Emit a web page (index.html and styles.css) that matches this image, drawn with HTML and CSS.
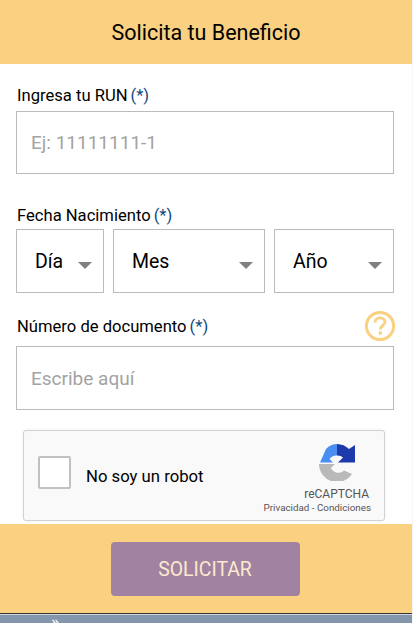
FILE: index.html
```html
<!DOCTYPE html>
<html lang="es">
<head>
	<meta charset="UTF-8">
	<title>Solicita tu Beneficio</title>
	<link rel="stylesheet" href="styles.css">
</head>
<body>
	<div class="main">
		<div class="head">Solicita tu Beneficio</div>
		<form class="form">
			<label class="lab lab_run">Ingresa tu RUN<span class="req">(*)</span></label>
			<input class="campo" type="text" placeholder="Ej: 11111111-1">

			<label class="lab lab_fecha">Fecha Nacimiento<span class="req">(*)</span></label>
			<div class="fecha">
				<div class="sel sel_dia"><select><option>Día</option></select></div>
				<div class="sel sel_mes"><select><option>Mes</option></select></div>
				<div class="sel sel_ano"><select><option>Año</option></select></div>
			</div>

			<div class="doc_row">
				<label class="lab">Número de documento<span class="req">(*)</span></label>
				<svg class="ayuda" width="32" height="32" viewBox="0 0 32 32">
					<circle cx="16" cy="16" r="13.6" fill="none" stroke="#fad081" stroke-width="3"/>
					<path d="M11 12.6c0-3 2.2-4.8 5-4.8s5 1.8 5 4.3c0 3.4-4.6 3.4-4.6 7.3" fill="none" stroke="#fad081" stroke-width="2.8"/>
					<rect x="14.8" y="21.4" width="3.2" height="3.2" fill="#fad081"/>
				</svg>
			</div>
			<input class="campo" type="text" placeholder="Escribe aquí">

			<div class="captcha">
				<span class="check"></span>
				<span class="robot">No soy un robot</span>
				<div class="marca">
					<svg width="36" height="37" viewBox="0 0 36 37">
						<path d="M0 20H16L12 24A8 8 0 0 0 25 26.5L33 30A18 18 0 0 1 0 20Z" fill="#b9b9b9"/>
						<path d="M18 0C14 0 10 1.500 7 5L1 18.500H14L10.500 15A8.500 8.500 0 0 1 18 11.500Z" fill="#4a8ef4"/>
						<path d="M18 0A18 18 0 0 1 30 5L36 1V18.500H19L24 13.500A8 8 0 0 0 18 11.500Z" fill="#1c3aa9"/>
					</svg>
					<p class="re">reCAPTCHA</p>
					<p class="links">Privacidad - Condiciones</p>
				</div>
			</div>
		</form>
		<div class="foot">
			<button class="enviar" type="button">SOLICITAR</button>
		</div>
		<div class="barra"><span>»</span></div>
	</div>
</body>
</html>
```

FILE: styles.css
```css
*{margin:0;padding:0;box-sizing:border-box;}
html,body{height:623px;overflow:hidden;}
body{background:#f6f6f6;font-family:Roboto,"Liberation Sans",sans-serif;color:#000;}
.main{width:412px;height:623px;background:#fff;display:flex;flex-direction:column;}
.head{height:64px;background:#fad081;font-size:21.5px;line-height:65px;text-align:center;}
.form{flex:1;padding:0 18px 0 16px;display:flex;flex-direction:column;}
.lab{display:block;font-size:16.6px;line-height:20px;padding-left:1px;}
.lab_run{margin-top:22px;margin-bottom:5px;}
.lab_fecha{margin-top:32px;margin-bottom:3px;}
.req{color:#124a7e;margin-left:3px;}
.campo{width:100%;height:63px;border:1px solid #bbb;outline:none;padding:0 14px;font-size:19px;font-family:Roboto,"Liberation Sans",sans-serif;border-radius:0;}
.form>.campo:last-of-type{height:64px;}
.campo::placeholder{color:#a3a3a3;opacity:1;}
.fecha{display:flex;gap:9px;height:64px;}
.sel{position:relative;height:64px;}
.sel_dia{width:88px;}
.sel_mes{width:152px;}
.sel_ano{width:120px;}
.sel select{width:100%;height:100%;appearance:none;-webkit-appearance:none;background:#fff;border:1px solid #bbb;border-radius:0;outline:none;padding-left:18px;font-size:19.5px;font-family:Roboto,"Liberation Sans",sans-serif;color:#000;}
.sel::after{content:"";position:absolute;right:12px;top:33px;border-left:7px solid transparent;border-right:7px solid transparent;border-top:7px solid #808080;}
.doc_row{display:flex;justify-content:space-between;align-items:flex-end;height:53px;padding-bottom:3px;}
.doc_row .lab{margin-bottom:6px;}
.ayuda{margin-right:-2px;margin-bottom:1px;}
.captcha{width:362px;height:91px;margin:20px 0 0 7px;background:#f9f9f9;border:1px solid #d3d3d3;border-radius:3px;box-shadow:0 0 3px rgba(0,0,0,0.08);display:flex;align-items:center;position:relative;}
.check{width:33px;height:33px;margin-left:14px;background:#fff;border:2px solid #c1c1c1;border-radius:2px;margin-top:-7px;}
.robot{font-size:16.7px;margin-left:15px;margin-top:1px;}
.marca{position:absolute;right:13px;top:13px;width:110px;text-align:right;}
.marca svg{display:block;margin-left:58px;}
.re{font-size:12px;line-height:14px;color:#555;margin-top:6px;margin-right:2px;}
.links{font-size:9.8px;line-height:12px;color:#555;white-space:nowrap;margin-top:1px;}
.foot{height:89px;background:#fad081;padding:18px 2px 0 0;display:flex;justify-content:center;}
.enviar{width:189px;height:54px;background:#a183a1;color:#fbe9cf;border:none;border-radius:4px;font-size:19.4px;font-family:Roboto,"Liberation Sans",sans-serif;}
.barra{height:10px;background:#8496ac;border-top:1px solid #333;box-shadow:inset 0 1px 0 #cfd7e0;overflow:hidden;position:relative;}
.barra span{position:absolute;left:51px;top:-2px;color:#fff;font-size:18px;line-height:20px;}
```
